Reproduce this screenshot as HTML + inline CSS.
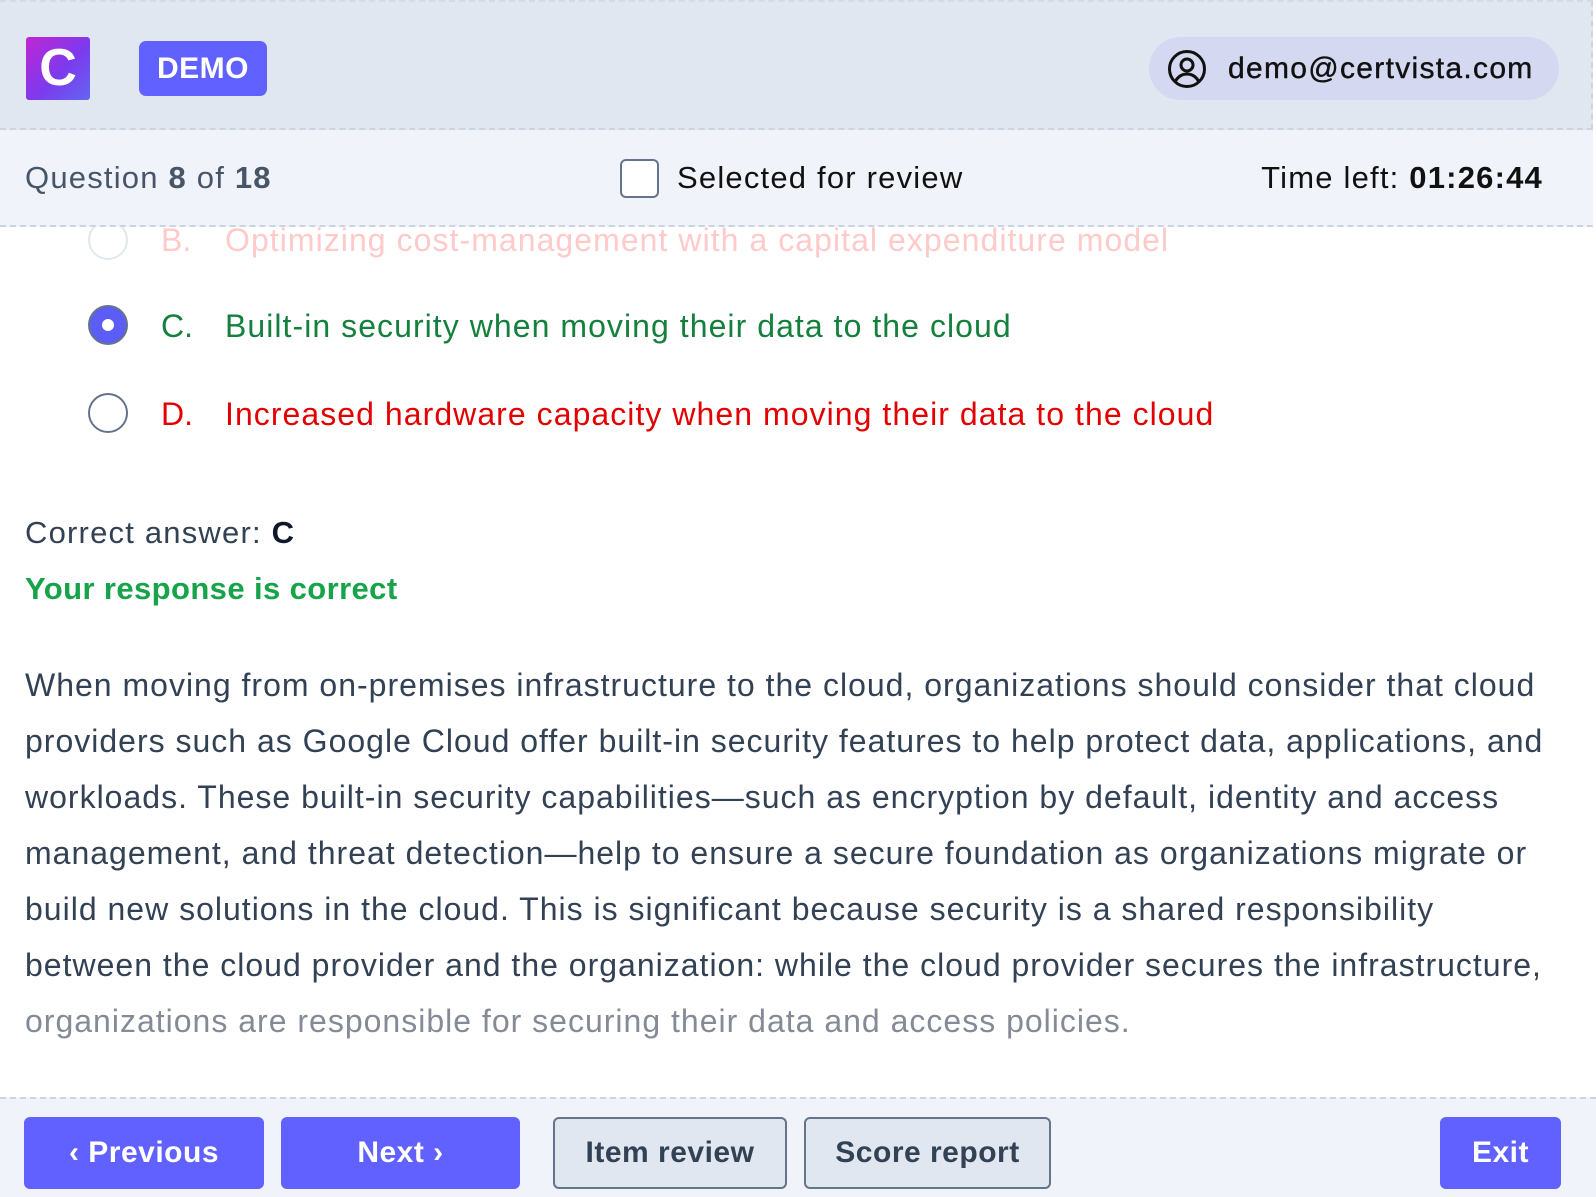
<!DOCTYPE html>
<html><head><meta charset="utf-8"><style>
*{margin:0;padding:0;box-sizing:border-box}
body{width:1596px;height:1197px;background:#fff;font-family:"Liberation Sans",Arial,sans-serif;position:relative;overflow:hidden;color:#334155}
.hdr{position:absolute;left:0;top:0;width:1593px;height:130px;background:#e1e7f1;border-bottom:2px dashed #cbd5e1;border-right:2px dashed #cbd5e1;border-top:2px dashed #d5dbe3}
.logo{position:absolute;left:26px;top:35px;width:64px;height:63px;border-radius:3px;background:linear-gradient(135deg,#c026d3,#7c3aed 55%,#6366f1);color:#fff;font-weight:bold;font-size:52px;line-height:63px;text-align:center}
.demo{position:absolute;left:139px;top:39px;width:128px;height:55px;border-radius:7px;background:#6161ff;color:#fff;font-weight:bold;font-size:30px;line-height:55px;text-align:center;letter-spacing:.5px}
.user{position:absolute;left:1149px;top:35px;width:410px;height:63px;border-radius:32px;background:#d4d8f1;color:#111;font-size:30px;line-height:63px;padding-left:79px;letter-spacing:1.3px;-webkit-text-stroke:.4px #111}
.user svg{position:absolute;left:18px;top:12px}
.sub{position:absolute;left:0;top:130px;width:1593px;height:97px;background:#f0f3f9;border-bottom:2px dashed #cbd5e1}
.q{position:absolute;left:25px;top:30px;font-size:31px;color:#475569;letter-spacing:1.2px}
.cb{position:absolute;left:620px;top:29px;width:39px;height:39px;border:2px solid #64748b;border-radius:6px;background:#fff}
.sel{position:absolute;left:677px;top:30px;font-size:31px;color:#111;letter-spacing:1.2px}
.time{position:absolute;right:50px;top:30px;font-size:31px;color:#111;letter-spacing:1.2px}
.radio{position:absolute;left:88px;width:40px;height:40px;border-radius:50%;border:2px solid #64748b;background:#fff}
.let{position:absolute;left:161px;font-size:32px}
.txt{position:absolute;left:225px;font-size:32px;white-space:nowrap;letter-spacing:1.05px}
.para div{position:absolute;left:25px;font-size:32px;white-space:nowrap;letter-spacing:1px;color:#334155}
.foot{position:absolute;left:0;top:1097px;width:1596px;height:100px;background:#f0f3f9;border-top:2px dashed #cbd5e1}
.btn{position:absolute;top:18px;height:72px;border-radius:6px;font-weight:bold;font-size:30px;line-height:72px;text-align:center;letter-spacing:.5px}
.p{background:#6161ff;color:#fff}
.g{background:#e1e7f1;color:#334155;border:2px solid #64748b;line-height:68px}
</style></head><body>
<div class="hdr">
 <div class="logo">C</div>
 <div class="demo">DEMO</div>
 <div class="user"><svg width="40" height="40" viewBox="0 0 40 40" fill="none" stroke="#111" stroke-width="3"><circle cx="20" cy="20" r="17.5"/><circle cx="20" cy="16" r="6"/><path d="M8.5 32c3-5 7-7 11.5-7s8.5 2 11.5 7"/></svg>demo@certvista.com</div>
</div>
<div class="radio" style="top:220px;border-color:#e2e8f0"></div>
<div class="let" style="top:222px;color:#fecaca">B.</div>
<div class="txt" style="top:222px;color:#fecaca">Optimizing cost-management with a capital expenditure model</div>
<div class="sub">
 <div class="q">Question <b>8</b> of <b>18</b></div>
 <div class="cb"></div>
 <div class="sel">Selected for review</div>
 <div class="time">Time left: <b>01:26:44</b></div>
</div>
<div class="radio" style="top:305px;background:#5c5cf6;border-color:#64748b"><div style="position:absolute;left:12px;top:12px;width:12px;height:12px;border-radius:50%;background:#fff"></div></div>
<div class="let" style="top:308px;color:#15803d">C.</div>
<div class="txt" style="top:308px;color:#15803d">Built-in security when moving their data to the cloud</div>
<div class="radio" style="top:393px"></div>
<div class="let" style="top:396px;color:#e30000">D.</div>
<div class="txt" style="top:396px;color:#e30000">Increased hardware capacity when moving their data to the cloud</div>
<div style="position:absolute;left:25px;top:515px;font-size:31px;color:#334155;letter-spacing:1.2px">Correct answer: <b style="color:#0f172a">C</b></div>
<div style="position:absolute;left:25px;top:571px;font-size:31px;font-weight:bold;color:#16a34a;letter-spacing:.4px">Your response is correct</div>
<div class="para">
<div style="top:667px">When moving from on-premises infrastructure to the cloud, organizations should consider that cloud</div>
<div style="top:723px">providers such as Google Cloud offer built-in security features to help protect data, applications, and</div>
<div style="top:779px">workloads. These built-in security capabilities—such as encryption by default, identity and access</div>
<div style="top:835px">management, and threat detection—help to ensure a secure foundation as organizations migrate or</div>
<div style="top:891px">build new solutions in the cloud. This is significant because security is a shared responsibility</div>
<div style="top:947px">between the cloud provider and the organization: while the cloud provider secures the infrastructure,</div>
<div style="top:1003px;color:#848b96">organizations are responsible for securing their data and access policies.</div>
</div>
<div class="foot">
 <div class="btn p" style="left:24px;width:240px">‹ Previous</div>
 <div class="btn p" style="left:281px;width:239px">Next ›</div>
 <div class="btn g" style="left:553px;width:234px">Item review</div>
 <div class="btn g" style="left:804px;width:247px">Score report</div>
 <div class="btn p" style="left:1440px;width:121px">Exit</div>
</div>
</body></html>
